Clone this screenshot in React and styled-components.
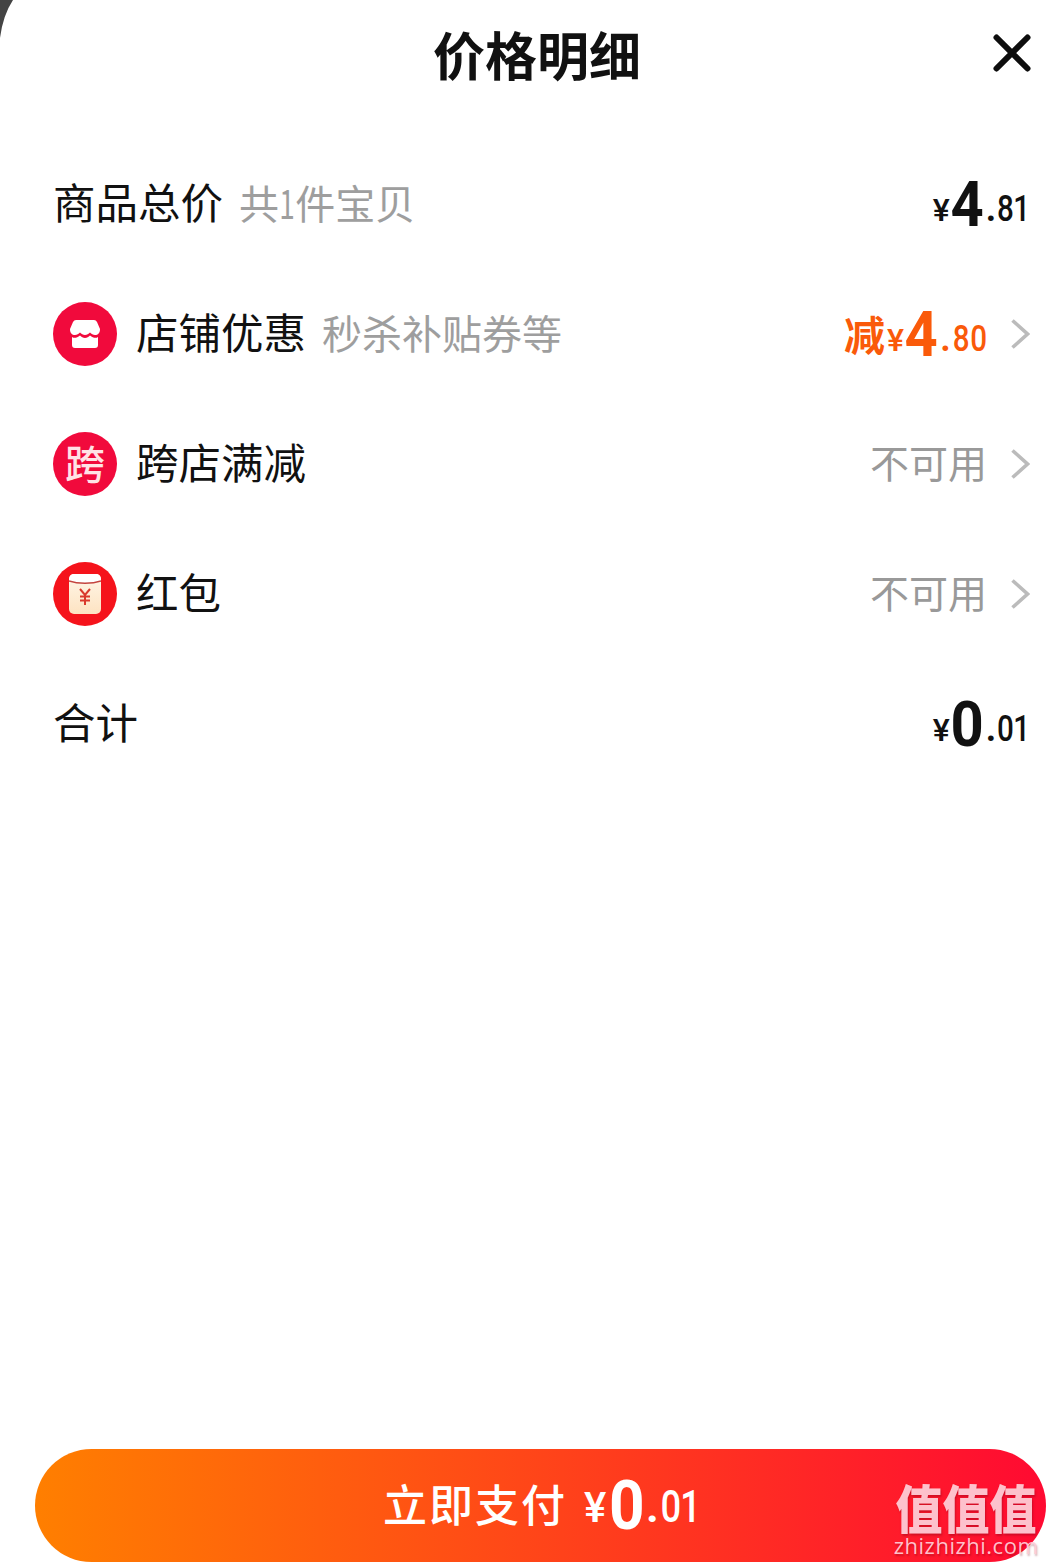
import React from "react";
import styled, { createGlobalStyle } from "styled-components";

const CJK = `"Noto Sans CJK SC", "Noto Sans", sans-serif`;
const DIGITS = `Roboto, "Liberation Sans", sans-serif`;

const GlobalStyle = createGlobalStyle`
  html, body {
    margin: 0;
    padding: 0;
    background: #fff;
  }
  body {
    font-family: ${CJK};
  }
`;

const StoreIcon = () => (
  <svg width="30" height="28" viewBox="0 0 30 28">
    <path
      d="M6 0H24Q26 0 27 2L30 9C30 13 28 15 25 15C23 15 21.500 14 20 12.500C18.500 14 17 15 15 15C13 15 11.500 14 10 12.500C8.500 14 7 15 5 15C2 15 0 13 0 9L3 2Q4 0 6 0Z"
      fill="#fff"
    />
    <path
      d="M2 17C4 18.500 7 18 10 15.500C11.500 17 13 18 15 18C17 18 18.500 17 20 15.500C23 18 26 18.500 28 17V25Q28 28 25 28H5Q2 28 2 25Z"
      fill="#fff"
    />
  </svg>
);

const RedPacketIcon = () => (
  <svg width="32" height="40" viewBox="0 0 32 40">
    <defs>
      <linearGradient id="packet" x1="0" y1="0" x2="0" y2="1">
        <stop offset="0" stopColor="#fff6e8" />
        <stop offset="1" stopColor="#fde3c2" />
      </linearGradient>
    </defs>
    <rect width="32" height="40" rx="5" fill="url(#packet)" />
    <path d="M0 6c0-4 2-6 5-6h22c3 0 5 2 5 6v1c-9 3-23 3-32 0z" fill="#fff" />
    <path d="M0 7c9 3 23 3 32 0" fill="none" stroke="#c4453f" strokeWidth="1.500" />
    <path
      d="M11 15l5 6 5-6M16 21v10M11 22.500h10M11 26.500h10"
      fill="none"
      stroke="#d9392d"
      strokeWidth="2"
    />
  </svg>
);

const Chevron = () => (
  <svg width="20" height="32" viewBox="0 0 20 32">
    <path d="M2.500 2.500L17.500 16L2.500 29.500" fill="none" stroke="#bbb" strokeWidth="3.600" />
  </svg>
);

const CloseIcon = () => (
  <svg width="38" height="38" viewBox="0 0 38 38">
    <path d="M3.500 3.500L34.500 34.500M34.500 3.500L3.500 34.500" fill="none" stroke="#0d0d0d" strokeWidth="6" strokeLinecap="round" />
  </svg>
);

const Price = ({ whole, cents, color, prefix }) => (
  <PriceWrap $color={color}>
    {prefix && <PricePrefix>{prefix}</PricePrefix>}
    <Yen>¥</Yen>
    <Whole>{whole}</Whole>
    <Dot>.</Dot>
    <Cents>{cents}</Cents>
  </PriceWrap>
);

export default function App() {
  return (
    <>
      <GlobalStyle />
      <Sheet>
        <Corner width="14" height="40" viewBox="0 0 14 40">
          <path d="M0 0H13Q3 15 0 38Z" fill="#444" />
        </Corner>

        <Header>
          <Title>价格明细</Title>
          <CloseButton aria-label="关闭">
            <CloseIcon />
          </CloseButton>
        </Header>

        <List>
          <Row>
            <Label>商品总价</Label>
            <Hint>
              共<HintDigit>1</HintDigit>件宝贝
            </Hint>
            <RowEnd $pad>
              <Price whole="4" cents="81" />
            </RowEnd>
          </Row>

          <Row>
            <Badge $bg="#f10a3c">
              <StoreIcon />
            </Badge>
            <Label>店铺优惠</Label>
            <Hint>秒杀补贴券等</Hint>
            <RowEnd>
              <Price whole="4" cents="80" prefix="减" color="#fa5a0a" />
              <Chevron />
            </RowEnd>
          </Row>

          <Row>
            <Badge $bg="#f10a3c">
              <BadgeText>跨</BadgeText>
            </Badge>
            <Label>跨店满减</Label>
            <RowEnd>
              <Unavailable>不可用</Unavailable>
              <Chevron />
            </RowEnd>
          </Row>

          <Row>
            <Badge $bg="#f5131b">
              <RedPacketIcon />
            </Badge>
            <Label>红包</Label>
            <RowEnd>
              <Unavailable>不可用</Unavailable>
              <Chevron />
            </RowEnd>
          </Row>

          <Row>
            <Label>合计</Label>
            <RowEnd $pad>
              <Price whole="0" cents="01" />
            </RowEnd>
          </Row>
        </List>

        <PayButton>
          <PayLabel>立即支付</PayLabel>
          <PayYen>¥</PayYen>
          <PayWhole>0</PayWhole>
          <PayDot>.</PayDot>
          <PayCents>01</PayCents>
        </PayButton>

        <Watermark>
          <WatermarkMark>值值值</WatermarkMark>
          <WatermarkUrl>zhizhizhi.com</WatermarkUrl>
        </Watermark>
      </Sheet>
    </>
  );
}

const Sheet = styled.div`
  position: relative;
  display: flex;
  flex-direction: column;
  width: 1046px;
  height: 1562px;
  overflow: hidden;
  background: #fff;
`;

// the dimmed page peeking out behind the rounded sheet
const Corner = styled.svg`
  position: absolute;
  top: 0;
  left: 0;
`;

const Header = styled.header`
  position: relative;
  display: flex;
  align-items: center;
  justify-content: center;
  height: 110px;
  padding-left: 28px;
  box-sizing: border-box;
`;

const Title = styled.h1`
  margin: 0 0 4px;
  font-size: 52px;
  font-weight: 700;
  color: #111;
`;

const CloseButton = styled.button`
  position: absolute;
  top: 34px;
  right: 15px;
  display: flex;
  padding: 0;
  border: none;
  background: none;
`;

const List = styled.div`
  display: flex;
  flex-direction: column;
  padding: 29px 16px 0 53px;
`;

const Row = styled.div`
  display: flex;
  align-items: center;
  height: 130px;
`;

const Badge = styled.div`
  display: flex;
  align-items: center;
  justify-content: center;
  width: 64px;
  height: 64px;
  margin-right: 19px;
  border-radius: 50%;
  background: ${({ $bg }) => $bg};
`;

const BadgeText = styled.span`
  font-size: 40px;
  font-weight: 500;
  line-height: 1;
  margin-bottom: 4px;
  color: #ffe3e6;
`;

const Label = styled.span`
  margin-bottom: 5px;
  font-size: 42.500px;
  line-height: 1;
  color: #111;
`;

const Hint = styled.span`
  margin: 0 0 5px 16px;
  font-size: 40px;
  line-height: 1;
  color: #9e9e9e;
`;

// the lone digit is set narrower than the CJK face draws it
const HintDigit = styled.span`
  display: inline-block;
  margin: 0 -3px;
  transform: scaleX(0.7);
`;

const RowEnd = styled.div`
  display: flex;
  align-items: center;
  gap: 23px;
  margin-left: auto;
  padding-right: ${({ $pad }) => ($pad ? "2px" : "0")};
`;

const Unavailable = styled.span`
  margin-bottom: 5px;
  font-size: 39px;
  line-height: 1;
  color: #999;
`;

const PriceWrap = styled.div`
  display: flex;
  align-items: baseline;
  margin-bottom: 10px;
  color: ${({ $color }) => $color || "#111"};
  font-family: ${DIGITS};
`;

const PricePrefix = styled.span`
  margin-right: 2px;
  font-family: ${CJK};
  font-size: 41px;
  font-weight: 700;
  line-height: 1;
`;

const Yen = styled.span`
  font-size: 32px;
  font-weight: 500;
  margin-right: 1px;
`;

// big digit sits a little below the baseline of the rest of the amount
const Whole = styled.span`
  margin: 0 -2px;
  font-size: 63px;
  font-weight: 700;
  line-height: 1;
  transform: translateY(5px) scaleX(0.92);
`;

const Dot = styled.span`
  margin: 0 0 0 3px;
  font-size: 36px;
  font-weight: 700;
`;

// narrow figures: scaled towards the right edge, margin takes back the freed space
const Cents = styled.span`
  margin-left: -6px;
  font-size: 36px;
  font-weight: 500;
  font-feature-settings: "pnum";
  transform: scaleX(0.82);
  transform-origin: right center;
`;

const PayButton = styled.button`
  display: flex;
  align-items: baseline;
  justify-content: center;
  flex-shrink: 0;
  width: 1011px;
  height: 113px;
  margin: auto 0 0 35px;
  padding: 9px 0 0;
  border: none;
  border-radius: 57px;
  color: #fff;
  background: linear-gradient(90deg, #ff7f00, #ff0a32);
`;

const PayLabel = styled.span`
  font-family: ${CJK};
  font-size: 44px;
  font-weight: 500;
  letter-spacing: 2px;
  margin-right: 17px;
`;

const PayYen = styled.span`
  font-family: ${DIGITS};
  font-size: 42px;
  font-weight: 500;
  margin-right: 3px;
`;

const PayWhole = styled.span`
  margin: 0 -2px;
  font-family: ${DIGITS};
  font-size: 69px;
  font-weight: 700;
  transform: translateY(7px) scaleX(0.9);
`;

const PayDot = styled.span`
  margin-left: 1px;
  font-family: ${DIGITS};
  font-size: 44px;
  font-weight: 700;
`;

const PayCents = styled.span`
  margin-left: -7px;
  font-family: ${DIGITS};
  font-size: 44px;
  font-weight: 500;
  font-feature-settings: "pnum";
  transform: scaleX(0.82);
  transform-origin: right center;
`;

const Watermark = styled.div`
  position: absolute;
  left: 895px;
  top: 1477px;
  display: flex;
  flex-direction: column;
  gap: 4px;
  align-items: center;
  width: 142px;
  color: rgba(255, 205, 215, 0.94);
  text-shadow: 1px 2px 2px rgba(120, 0, 20, 0.35);
`;

const WatermarkMark = styled.span`
  font-family: ${CJK};
  font-size: 47px;
  font-weight: 900;
  line-height: 52px;
  white-space: nowrap;
  transform: scaleY(1.12);
  transform-origin: center top;
`;

const WatermarkUrl = styled.span`
  font-family: "Open Sans", sans-serif;
  font-size: 22px;
  line-height: 24px;
  letter-spacing: 0.500px;
`;
